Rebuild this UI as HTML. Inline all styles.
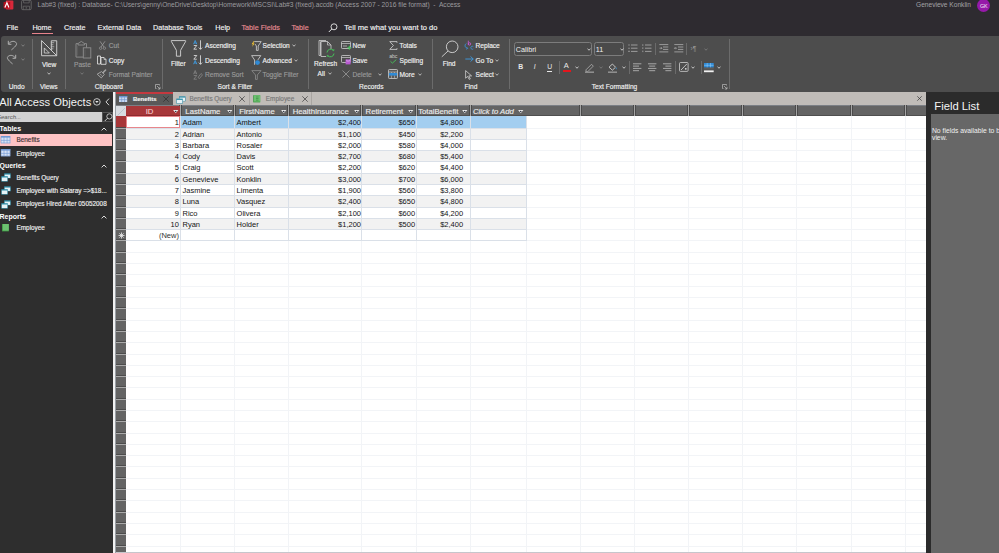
<!DOCTYPE html>
<html><head><meta charset="utf-8">
<style>
*{box-sizing:border-box}
html,body{margin:0;padding:0}
body{width:999px;height:553px;overflow:hidden;position:relative;background:#2e2b30;font-family:"Liberation Sans",sans-serif;}
.a{position:absolute;white-space:pre;line-height:1}
.rb,.gl,.tb,.nv,.gh,.tt{-webkit-text-stroke:0.15px currentColor}
.tb{font-size:7.2px;color:#f2f2f2}
.rb{font-size:6.6px;color:#f0f0f0}
.dis{color:#9a9a9a}
.gl{font-size:6.6px;color:#f0f0f0}
.sep{position:absolute;width:1px;background:#6b6b6b}
.nv{font-size:6.4px;color:#f0f0f0}
.nh{font-size:7px;color:#fff;font-weight:bold}
.gd{font-size:7.5px;color:#141414}
.gh{font-size:7.7px;color:#ececec}
.tt{font-size:6.4px}
svg{position:absolute;overflow:visible}
</style></head>
<body>
<!-- TITLE BAR -->
<svg style="left:2.5px;top:0px" width="11" height="11" viewBox="0 0 11 11"><rect x="2.8" y="0.6" width="7.6" height="8.8" rx="1" fill="#d8283a"/><rect x="0.6" y="2" width="6.6" height="6.4" rx="0.6" fill="#b5101e"/><path d="M1.9 7.4L3.9 2.7L5.9 7.4" fill="none" stroke="#fff" stroke-width="1.2"/></svg>
<svg style="left:21px;top:0px" width="11" height="11" viewBox="0 0 11 11"><rect x="0.6" y="0.3" width="9.6" height="9.4" rx="1.2" fill="none" stroke="#6e6e6e" stroke-width="0.8"/><path d="M2.6 0.4V2.9H8.2V0.4" fill="none" stroke="#6e6e6e" stroke-width="0.7"/><path d="M2.2 9.6V6.2H8.6V9.6" fill="none" stroke="#6e6e6e" stroke-width="0.7"/><rect x="4.6" y="7.2" width="1.5" height="1.4" fill="#5a5a5a"/></svg>
<div class="a" style="left:37.5px;top:2px;font-size:6.67px;color:#9c9b9f">Lab#3 (fixed) : Database- C:\Users\genny\OneDrive\Desktop\Homework\MSCSI\Lab#3 (fixed).accdb (Access 2007 - 2016 file format)  -  Access</div>
<div class="a" style="left:916px;top:2px;font-size:6.6px;color:#a4a3a7">Genevieve Konklin</div>
<div class="a" style="left:977.2px;top:-1px;width:13.2px;height:13.2px;border-radius:50%;background:#9619a9"></div>
<div class="a" style="left:977.2px;top:3.6px;width:13.2px;text-align:center;font-size:5.4px;color:#f4e8f6">GK</div>

<!-- TABS -->
<div class="a tb" style="left:6.6px;top:24.3px">File</div>
<div class="a tb" style="left:32.4px;top:24.3px">Home</div>
<div class="a" style="left:32.4px;top:33.2px;width:20.6px;height:1.3px;background:#e8838b"></div>
<div class="a tb" style="left:64px;top:24.3px">Create</div>
<div class="a tb" style="left:97.6px;top:24.3px">External Data</div>
<div class="a tb" style="left:153px;top:24.3px">Database Tools</div>
<div class="a tb" style="left:215.2px;top:24.3px">Help</div>
<div class="a tb" style="left:241.5px;top:24.3px;color:#e58b92">Table Fields</div>
<div class="a tb" style="left:291.5px;top:24.3px;color:#e58b92">Table</div>
<svg style="left:328px;top:22.5px" width="10" height="10" viewBox="0 0 10 10"><circle cx="6" cy="3.8" r="3" fill="none" stroke="#e8e8e8" stroke-width="0.9"/><path d="M3.8 6L0.8 9" stroke="#e8e8e8" stroke-width="1"/></svg>
<div class="a tb" style="left:344.3px;top:24.1px;font-size:7.55px">Tell me what you want to do</div>

<!-- RIBBON -->
<div class="a" style="left:0.6px;top:36px;width:999px;height:55.8px;background:#4d4d4d;border-radius:3px 0 0 3px"></div>
<!-- separators -->
<div class="sep" style="left:32.4px;top:38.5px;height:50.3px"></div>
<div class="sep" style="left:65.4px;top:38.5px;height:50.3px"></div>
<div class="sep" style="left:162.2px;top:38.5px;height:50.3px"></div>
<div class="sep" style="left:308px;top:38.5px;height:50.3px"></div>
<div class="sep" style="left:432.4px;top:38.5px;height:50.3px"></div>
<div class="sep" style="left:509px;top:38.5px;height:50.3px"></div>
<div class="sep" style="left:728.5px;top:38.5px;height:50.3px"></div>
<!-- group labels -->
<div class="a gl" style="left:8.8px;top:84.0px">Undo</div>
<div class="a gl" style="left:40px;top:84.0px">Views</div>
<div class="a gl" style="left:94.8px;top:84.0px">Clipboard</div>
<div class="a gl" style="left:217.5px;top:84.0px">Sort &amp; Filter</div>
<div class="a gl" style="left:359px;top:84.0px">Records</div>
<div class="a gl" style="left:464.6px;top:84.0px">Find</div>
<div class="a gl" style="left:591.8px;top:84.0px">Text Formatting</div>
<svg style="left:155px;top:84px" width="6" height="6" viewBox="0 0 6 6"><path d="M0.5 0.5h4v1M0.5 0.5v4h1" fill="none" stroke="#bdbdbd" stroke-width="0.7"/><path d="M2 2l3 3M5 2.8V5H2.8" fill="none" stroke="#bdbdbd" stroke-width="0.7"/></svg>
<svg style="left:721.5px;top:84px" width="6" height="6" viewBox="0 0 6 6"><path d="M0.5 0.5h4v1M0.5 0.5v4h1" fill="none" stroke="#bdbdbd" stroke-width="0.7"/><path d="M2 2l3 3M5 2.8V5H2.8" fill="none" stroke="#bdbdbd" stroke-width="0.7"/></svg>

<!-- UNDO -->
<svg style="left:7px;top:39.5px" width="11" height="11" viewBox="0 0 11 11"><path d="M1.3 0.8V4.3H4.4" fill="none" stroke="#b0b0b0" stroke-width="1"/><path d="M1.6 4C3 1.6 6.5 0.4 8.8 2.3C10.5 3.7 9.7 5.6 4.4 9.9" fill="none" stroke="#b0b0b0" stroke-width="0.95"/></svg>
<svg style="left:21.3px;top:43.6px" width="4" height="3" viewBox="0 0 4 3"><path d="M0.5 0.8L2 2.2L3.5 0.8" fill="none" stroke="#9a9a9a" stroke-width="0.7"/></svg>
<svg style="left:7px;top:53.8px" width="11" height="11" viewBox="0 0 11 11"><path d="M8.7 0.8V4.3H5.6" fill="none" stroke="#b0b0b0" stroke-width="1"/><path d="M8.4 4C7 1.6 3.5 0.4 1.2 2.3C-0.5 3.7 0.3 5.6 5.6 9.9" fill="none" stroke="#b0b0b0" stroke-width="0.95"/></svg>
<svg style="left:21.3px;top:58.4px" width="4" height="3" viewBox="0 0 4 3"><path d="M0.5 0.8L2 2.2L3.5 0.8" fill="none" stroke="#9a9a9a" stroke-width="0.7"/></svg>

<!-- VIEW -->
<svg style="left:40.6px;top:40.3px" width="16.5" height="16.5" viewBox="0 0 17 17"><path d="M0.6 0.6L16.2 16.2H0.6Z" fill="none" stroke="#d4d4d4" stroke-width="0.95"/><path d="M3.4 8.2L8.6 13.4H3.4Z" fill="none" stroke="#d4d4d4" stroke-width="0.85"/><path d="M10.6 10.6V0.8h5.6v15.4" fill="none" stroke="#d4d4d4" stroke-width="0.95"/><path d="M10.6 2.8h3M10.6 4.9h2.2M10.6 7h3M10.6 9.1h2.2" stroke="#d4d4d4" stroke-width="0.7"/></svg>
<div class="a rb" style="left:42px;top:61.8px">View</div>
<svg style="left:47px;top:71.5px" width="4" height="3" viewBox="0 0 4 3"><path d="M0.5 0.8L2 2.2L3.5 0.8" fill="none" stroke="#e0e0e0" stroke-width="0.8"/></svg>

<!-- CLIPBOARD -->
<svg style="left:75px;top:40.5px" width="17" height="18" viewBox="0 0 17 18"><path d="M3 2.6H1v13.5h7" fill="none" stroke="#8e8e8e" stroke-width="0.9"/><path d="M9.5 2.6h2v4" fill="none" stroke="#8e8e8e" stroke-width="0.9"/><path d="M3 2.6L6.3 0.4L9.5 2.6V4H3Z" fill="none" stroke="#8e8e8e" stroke-width="0.9"/><rect x="8.3" y="6.8" width="7.5" height="10.2" fill="none" stroke="#8e8e8e" stroke-width="0.9"/><path d="M2.6 4.5v10M10 8.5v7" stroke="#6a6a6a" stroke-width="0.5"/></svg>
<div class="a rb dis" style="left:74px;top:61.8px">Paste</div>
<svg style="left:79.5px;top:71.5px" width="4" height="3" viewBox="0 0 4 3"><path d="M0.5 0.8L2 2.2L3.5 0.8" fill="none" stroke="#8e8e8e" stroke-width="0.7"/></svg>
<svg style="left:98.5px;top:40.8px" width="7" height="9" viewBox="0 0 7 9"><path d="M1 0.3L5 6M6 0.3L2 6" fill="none" stroke="#9a9a9a" stroke-width="0.8"/><circle cx="1.6" cy="7.2" r="1.2" fill="none" stroke="#9a9a9a" stroke-width="0.7"/><circle cx="5.4" cy="7.2" r="1.2" fill="none" stroke="#9a9a9a" stroke-width="0.7"/></svg>
<div class="a rb dis" style="left:108.8px;top:43.0px">Cut</div>
<svg style="left:97px;top:54.5px" width="10" height="10" viewBox="0 0 10 10"><path d="M0.5 1h3v8h-3z" fill="none" stroke="#e8e8e8" stroke-width="0.8"/><path d="M4 2.5h3l2 2v4.8H4z" fill="none" stroke="#e8e8e8" stroke-width="0.8"/><path d="M7 2.5v2h2" fill="none" stroke="#e8e8e8" stroke-width="0.6"/></svg>
<div class="a rb" style="left:108.8px;top:57.5px">Copy</div>
<svg style="left:96px;top:68px" width="11" height="11" viewBox="0 0 11 11"><path d="M1.2 6.2L5.3 9.9L8.3 6.4L5.6 3.6Z" fill="none" stroke="#a4a4a4" stroke-width="1" stroke-linejoin="round"/><path d="M4 6.2L6 7.6" stroke="#a4a4a4" stroke-width="0.7"/><path d="M7.2 4.6L9.6 2" stroke="#a4a4a4" stroke-width="1.5" stroke-linecap="round"/></svg>
<div class="a rb dis" style="left:108.8px;top:72.2px">Format Painter</div>

<!-- SORT & FILTER -->
<svg style="left:169.5px;top:40px" width="17" height="17" viewBox="0 0 17 17"><path d="M1.3 0.6H15.2Q16.2 0.6 15.6 1.5L10.6 10.3V16.2H6.4V10.3L1.4 1.5Q0.8 0.6 1.3 0.6Z" fill="none" stroke="#d6d6d6" stroke-width="0.9"/></svg>
<div class="a rb" style="left:171px;top:61.2px">Filter</div>
<svg style="left:193.3px;top:40px" width="10" height="10" viewBox="0 0 10 10"><path d="M0.6 4.2L2.2 0.5L3.8 4.2M1.2 3h2" fill="none" stroke="#3e9be0" stroke-width="0.9"/><path d="M0.8 5.5h3L0.8 9.2h3" fill="none" stroke="#e8e8e8" stroke-width="0.8"/><path d="M7.5 0.3v9M5.8 7.6L7.5 9.3L9.2 7.6" fill="none" stroke="#e8e8e8" stroke-width="0.8"/></svg>
<div class="a rb" style="left:205px;top:43.0px">Ascending</div>
<svg style="left:193.3px;top:54.5px" width="10" height="10" viewBox="0 0 10 10"><path d="M0.6 9.2L2.2 5.5L3.8 9.2M1.2 8h2" fill="none" stroke="#3e9be0" stroke-width="0.9"/><path d="M0.8 0.5h3L0.8 4.2h3" fill="none" stroke="#e8e8e8" stroke-width="0.8"/><path d="M7.5 0.3v9M5.8 7.6L7.5 9.3L9.2 7.6" fill="none" stroke="#e8e8e8" stroke-width="0.8"/></svg>
<div class="a rb" style="left:205px;top:57.5px">Descending</div>
<svg style="left:193.3px;top:69.5px" width="10" height="10" viewBox="0 0 10 10"><path d="M0.6 4.2L2.2 0.5L3.8 4.2M1.2 3h2M0.8 5.5h3L0.8 9.2h3" fill="none" stroke="#8e8e8e" stroke-width="0.7"/><path d="M5 7.5L8 3.5L9.5 4.8L6.5 8.5Z" fill="none" stroke="#8e8e8e" stroke-width="0.7"/></svg>
<div class="a rb dis" style="left:205px;top:72.2px">Remove Sort</div>
<svg style="left:250.5px;top:40.5px" width="11" height="10" viewBox="0 0 11 10"><path d="M3.2 0.6H10.2L7.2 5V9.4H5.4V5L4 3" fill="none" stroke="#d6d6d6" stroke-width="0.8"/><path d="M2.5 0.2L0.6 3.2H2L1 6L3.6 2.6H2.3L3.3 0.2Z" fill="#f4c430"/></svg>
<div class="a rb" style="left:262.6px;top:43.0px">Selection</div>
<svg style="left:291.8px;top:44px" width="4" height="3" viewBox="0 0 4 3"><path d="M0.5 0.8L2 2.2L3.5 0.8" fill="none" stroke="#e0e0e0" stroke-width="0.8"/></svg>
<svg style="left:250.5px;top:54.5px" width="11" height="11" viewBox="0 0 11 11"><path d="M0.6 0.6H9.8L6.8 5M3.6 5L0.6 0.6M3.6 5V9.8" fill="none" stroke="#d6d6d6" stroke-width="0.8"/><circle cx="6.5" cy="7.6" r="2.4" fill="#2f8ad6"/></svg>
<div class="a rb" style="left:262.6px;top:57.5px">Advanced</div>
<svg style="left:294.3px;top:58.5px" width="4" height="3" viewBox="0 0 4 3"><path d="M0.5 0.8L2 2.2L3.5 0.8" fill="none" stroke="#e0e0e0" stroke-width="0.8"/></svg>
<svg style="left:250.5px;top:69.5px" width="11" height="10" viewBox="0 0 11 10"><path d="M0.8 0.6H10L6.3 5V9.4H4.5V5Z" fill="none" stroke="#8e8e8e" stroke-width="0.8"/></svg>
<div class="a rb dis" style="left:262.6px;top:72.2px">Toggle Filter</div>

<!-- RECORDS -->
<svg style="left:318px;top:40px" width="18" height="18" viewBox="0 0 18 18"><path d="M2.5 1.5V15.5H1V0.5h7" fill="none" stroke="#cfcfcf" stroke-width="0.8"/><path d="M3 1.5h6.5l3.5 3.5V9M3 1.5V16.5h5" fill="none" stroke="#cfcfcf" stroke-width="0.8"/><path d="M9.5 1.5v3.5h3.5" fill="none" stroke="#cfcfcf" stroke-width="0.7"/><path d="M9 12.5A3.6 3.6 0 0 1 15.4 10.5M16 13.5A3.6 3.6 0 0 1 9.6 15.5" fill="none" stroke="#46c25a" stroke-width="1"/><path d="M14.2 9.6l1.5 1.2l0.2-1.8M10.8 16.4l-1.5-1.2l-0.2 1.8" fill="none" stroke="#46c25a" stroke-width="0.8"/></svg>
<div class="a rb" style="left:314px;top:61.4px">Refresh</div>
<div class="a rb" style="left:317.6px;top:70.9px">All</div>
<svg style="left:327.5px;top:71.5px" width="4" height="3" viewBox="0 0 4 3"><path d="M0.5 0.8L2 2.2L3.5 0.8" fill="none" stroke="#e0e0e0" stroke-width="0.8"/></svg>
<svg style="left:340.5px;top:40.5px" width="11" height="9" viewBox="0 0 11 9"><rect x="0.5" y="0.5" width="9" height="7" rx="0.8" fill="none" stroke="#cfcfcf" stroke-width="0.8"/><path d="M0.5 2.5h9M2 5h4" stroke="#cfcfcf" stroke-width="0.7"/><path d="M8.3 4.8v4M6.3 6.8h4" stroke="#46c25a" stroke-width="1.1"/></svg>
<div class="a rb" style="left:352.4px;top:43.0px">New</div>
<svg style="left:340.5px;top:54.5px" width="11" height="10" viewBox="0 0 11 10"><rect x="0.5" y="0.5" width="9" height="7" rx="0.8" fill="none" stroke="#cfcfcf" stroke-width="0.8"/><path d="M0.5 2.5h9" stroke="#cfcfcf" stroke-width="0.7"/><rect x="4.6" y="4.4" width="5" height="5" fill="#b65ad0"/><path d="M5.8 4.6v1.5h2.6V4.6" stroke="#e9c8f2" stroke-width="0.5" fill="none"/></svg>
<div class="a rb" style="left:352.4px;top:57.5px">Save</div>
<svg style="left:341.8px;top:69.8px" width="8" height="8" viewBox="0 0 8 8"><path d="M0.5 0.5L7.5 7.5M7.5 0.5L0.5 7.5" stroke="#9a9a9a" stroke-width="0.8"/></svg>
<div class="a rb dis" style="left:352.6px;top:72.2px">Delete</div>
<svg style="left:377.5px;top:73px" width="4" height="3" viewBox="0 0 4 3"><path d="M0.5 0.8L2 2.2L3.5 0.8" fill="none" stroke="#d8d8d8" stroke-width="0.8"/></svg>
<svg style="left:389px;top:40.5px" width="9" height="9" viewBox="0 0 9 9"><path d="M8 1.8V0.6H0.8L4.4 4.5L0.8 8.4H8V7.2" fill="none" stroke="#d6d6d6" stroke-width="0.8"/></svg>
<div class="a rb" style="left:399.6px;top:43.0px">Totals</div>
<div class="a" style="left:389.3px;top:54.2px;font-size:5.2px;color:#c8c8c8;letter-spacing:-0.2px">abc</div>
<svg style="left:390px;top:59.2px" width="7" height="5" viewBox="0 0 7 5"><path d="M0.5 2.3L2.4 4.1L6.3 0.6" fill="none" stroke="#46b85a" stroke-width="1"/></svg>
<div class="a rb" style="left:399.6px;top:57.5px">Spelling</div>
<svg style="left:388px;top:68.9px" width="10" height="10" viewBox="0 0 10 10"><rect x="0.5" y="0.5" width="9" height="9" rx="0.8" fill="#5a5a5a" stroke="#cfcfcf" stroke-width="0.8"/><path d="M0.5 3h9" stroke="#cfcfcf" stroke-width="0.6"/><rect x="0.9" y="4" width="8.2" height="2.6" fill="#2f8ad6"/><path d="M3.5 3v1M6.5 3v1M3.5 6.6v2.6M6.5 6.6v2.6" stroke="#cfcfcf" stroke-width="0.5"/></svg>
<div class="a rb" style="left:399.6px;top:72.2px">More</div>
<svg style="left:417.5px;top:73px" width="4" height="3" viewBox="0 0 4 3"><path d="M0.5 0.8L2 2.2L3.5 0.8" fill="none" stroke="#e0e0e0" stroke-width="0.8"/></svg>

<!-- FIND -->
<svg style="left:440.5px;top:40px" width="18" height="18" viewBox="0 0 18 18"><circle cx="11.2" cy="6.8" r="5.8" fill="none" stroke="#d6d6d6" stroke-width="0.9"/><path d="M7 11L0.8 16.8" stroke="#d6d6d6" stroke-width="0.9"/></svg>
<div class="a rb" style="left:442.7px;top:60.6px">Find</div>
<svg style="left:464px;top:39.5px" width="10" height="11" viewBox="0 0 10 11"><path d="M4.3 0.7v4.4" stroke="#c95ad6" stroke-width="0.8"/><circle cx="5.5" cy="3.9" r="1.2" fill="none" stroke="#c95ad6" stroke-width="0.8"/><path d="M9.3 6.6A1.5 1.5 0 1 0 9.3 8.9" fill="none" stroke="#3a94dc" stroke-width="0.8"/><path d="M2.4 3.4C0.4 4.6 0.6 7.6 3.4 8.3" fill="none" stroke="#3a94dc" stroke-width="0.9"/><path d="M2.5 7.1L3.7 8.3L2.4 9.4" fill="none" stroke="#3a94dc" stroke-width="0.8"/></svg>
<div class="a rb" style="left:475.6px;top:43.0px">Replace</div>
<svg style="left:464.5px;top:56px" width="9" height="6" viewBox="0 0 9 6"><path d="M0.3 3h8M5.5 0.4L8.2 3L5.5 5.6" fill="none" stroke="#3e9be0" stroke-width="0.9"/></svg>
<div class="a rb" style="left:475.6px;top:57.5px">Go To</div>
<svg style="left:494.8px;top:58.5px" width="4" height="3" viewBox="0 0 4 3"><path d="M0.5 0.8L2 2.2L3.5 0.8" fill="none" stroke="#e0e0e0" stroke-width="0.8"/></svg>
<svg style="left:465.3px;top:69.8px" width="8" height="10" viewBox="0 0 8 10"><path d="M0.6 0.6V8.2L2.6 6.4L4.2 9.4L5.3 8.9L3.8 5.9H6.6Z" fill="none" stroke="#d8d8d8" stroke-width="0.75" stroke-linejoin="round"/></svg>
<div class="a rb" style="left:475.6px;top:72.2px">Select</div>
<svg style="left:495.2px;top:73px" width="4" height="3" viewBox="0 0 4 3"><path d="M0.5 0.8L2 2.2L3.5 0.8" fill="none" stroke="#e0e0e0" stroke-width="0.8"/></svg>

<!-- TEXT FORMATTING -->
<div class="a" style="left:514px;top:42px;width:77.7px;height:13.5px;border:0.8px solid #7c7c7c;border-radius:2.5px;background:#4a4a4a"></div>
<div class="a" style="left:515.8px;top:45.6px;font-size:7.2px;color:#f0f0f0">Calibri</div>
<svg style="left:586.8px;top:48px" width="4" height="3" viewBox="0 0 4 3"><path d="M0.5 0.8L2 2.2L3.5 0.8" fill="none" stroke="#e8e8e8" stroke-width="0.8"/></svg>
<div class="a" style="left:593.9px;top:42px;width:30.6px;height:13.5px;border:0.8px solid #7c7c7c;border-radius:2.5px;background:#4a4a4a"></div>
<div class="a" style="left:595.7px;top:45.6px;font-size:7.2px;color:#f0f0f0">11</div>
<svg style="left:619.6px;top:48px" width="4" height="3" viewBox="0 0 4 3"><path d="M0.5 0.8L2 2.2L3.5 0.8" fill="none" stroke="#e8e8e8" stroke-width="0.8"/></svg>
<svg style="left:627.5px;top:44.4px" width="10" height="9" viewBox="0 0 10 9"><path d="M0.5 1h1M0.5 4.2h1M0.5 7.4h1" stroke="#bdbdbd" stroke-width="1.1"/><path d="M3 1h6.5M3 4.2h6.5M3 7.4h6.5" stroke="#bdbdbd" stroke-width="0.7"/></svg>
<svg style="left:642.2px;top:44.4px" width="10" height="9" viewBox="0 0 10 9"><path d="M0.8 0.3v1.5M0.8 3.4v1.5M0.8 6.6v1.5" stroke="#bdbdbd" stroke-width="0.7"/><path d="M3 1h6.5M3 4.2h6.5M3 7.4h6.5" stroke="#bdbdbd" stroke-width="0.7"/></svg>
<div class="sep" style="left:655.4px;top:42.6px;height:12.9px"></div>
<svg style="left:659px;top:44.4px" width="10" height="9" viewBox="0 0 10 9"><path d="M0.3 0.6h9M4 3h5.3M4 5.4h5.3M0.3 7.9h9" stroke="#bdbdbd" stroke-width="0.7"/><path d="M0.5 4.2h2.5M2 3.2l1 1l-1 1" fill="none" stroke="#bdbdbd" stroke-width="0.6"/></svg>
<svg style="left:673.5px;top:44.4px" width="10" height="9" viewBox="0 0 10 9"><path d="M0.3 0.6h9M4 3h5.3M4 5.4h5.3M0.3 7.9h9" stroke="#bdbdbd" stroke-width="0.7"/><path d="M0.5 4.2h2.5M1.5 3.2l-1 1l1 1" fill="none" stroke="#bdbdbd" stroke-width="0.6"/></svg>
<div class="sep" style="left:686.4px;top:42.6px;height:12.9px"></div>
<div class="a" style="left:690.5px;top:45.6px;font-size:6.5px;color:#9a9a9a">›¶</div>
<svg style="left:703.5px;top:48px" width="4" height="3" viewBox="0 0 4 3"><path d="M0.5 0.8L2 2.2L3.5 0.8" fill="none" stroke="#8a8a8a" stroke-width="0.7"/></svg>

<div class="a" style="left:518.2px;top:64px;font-size:6.8px;font-weight:bold;color:#e8e8e8">B</div>
<div class="a" style="left:533.8px;top:64px;font-size:6.8px;font-style:italic;color:#e8e8e8">I</div>
<div class="a" style="left:547.2px;top:63.8px;font-size:6.8px;color:#e8e8e8">U</div>
<div class="a" style="left:547.2px;top:70.6px;width:5.2px;height:0.8px;background:#e8e8e8"></div>
<div class="sep" style="left:558.5px;top:60.6px;height:13.2px"></div>
<div class="a" style="left:563.8px;top:62.2px;font-size:7.5px;color:#e8e8e8">A</div>
<div class="a" style="left:562.7px;top:69.6px;width:8.1px;height:2.1px;background:#e3161d"></div>
<svg style="left:575px;top:66.2px" width="4" height="3" viewBox="0 0 4 3"><path d="M0.5 0.8L2 2.2L3.5 0.8" fill="none" stroke="#e8e8e8" stroke-width="0.8"/></svg>
<svg style="left:585px;top:62.5px" width="10" height="10" viewBox="0 0 10 10"><path d="M1 6.8L6.5 1.3L8.3 3.1L2.8 8.6H1Z" fill="none" stroke="#bdbdbd" stroke-width="0.7"/><rect x="0" y="8.4" width="9" height="1.6" fill="#8e8e8e"/></svg>
<svg style="left:598.5px;top:66.2px" width="4" height="3" viewBox="0 0 4 3"><path d="M0.5 0.8L2 2.2L3.5 0.8" fill="none" stroke="#8a8a8a" stroke-width="0.7"/></svg>
<svg style="left:608.3px;top:62.5px" width="10" height="10" viewBox="0 0 10 10"><path d="M1 4.2L4.4 1L7.5 4.2L4.4 7.2Z" fill="none" stroke="#e0e0e0" stroke-width="0.8"/><path d="M8.2 4.2q1 1.3 0 2.2q-1-0.9 0-2.2" fill="#3e9be0"/><rect x="0" y="8.4" width="9" height="1.6" fill="#8e8e8e"/></svg>
<svg style="left:621.5px;top:66.2px" width="4" height="3" viewBox="0 0 4 3"><path d="M0.5 0.8L2 2.2L3.5 0.8" fill="none" stroke="#e8e8e8" stroke-width="0.8"/></svg>
<div class="sep" style="left:629.4px;top:60.6px;height:13.2px"></div>
<svg style="left:633.2px;top:63px" width="9" height="9" viewBox="0 0 9 9"><path d="M0 0.8h8.4M0 3.1h6M0 5.4h8.4M0 7.7h6" stroke="#cfcfcf" stroke-width="0.7"/></svg>
<svg style="left:647.9px;top:63px" width="9" height="9" viewBox="0 0 9 9"><path d="M0 0.8h8.4M1.2 3.1h6M0 5.4h8.4M1.2 7.7h6" stroke="#cfcfcf" stroke-width="0.7"/></svg>
<svg style="left:662.6px;top:63px" width="9" height="9" viewBox="0 0 9 9"><path d="M0 0.8h8.4M2.4 3.1h6M0 5.4h8.4M2.4 7.7h6" stroke="#cfcfcf" stroke-width="0.7"/></svg>
<div class="sep" style="left:675.3px;top:60.6px;height:13.2px"></div>
<svg style="left:678.5px;top:62.2px" width="10" height="10" viewBox="0 0 10 10"><rect x="0.5" y="0.5" width="8.6" height="8.9" rx="1" fill="none" stroke="#cfcfcf" stroke-width="0.8"/><path d="M2 8L7.8 2" stroke="#dcdcdc" stroke-width="0.8"/><circle cx="6.8" cy="6.8" r="0.9" fill="#dcdcdc"/></svg>
<svg style="left:690.8px;top:66.2px" width="4" height="3" viewBox="0 0 4 3"><path d="M0.5 0.8L2 2.2L3.5 0.8" fill="none" stroke="#e8e8e8" stroke-width="0.8"/></svg>
<div class="sep" style="left:700.5px;top:60.6px;height:13.2px"></div>
<svg style="left:703.8px;top:62.7px" width="10" height="10" viewBox="0 0 10 10"><rect x="0" y="0" width="9.7" height="4.6" fill="#2f8ad6"/><path d="M0 2.3h9.7M3.2 0v4.6M6.5 0v4.6" stroke="#9fd0f5" stroke-width="0.5"/><rect x="0" y="4.6" width="9.7" height="2" fill="#5a5a5a"/><rect x="0" y="7.4" width="9.7" height="1.8" fill="#f0f0f0"/></svg>
<svg style="left:717.2px;top:66.2px" width="4" height="3" viewBox="0 0 4 3"><path d="M0.5 0.8L2 2.2L3.5 0.8" fill="none" stroke="#e8e8e8" stroke-width="0.8"/></svg>

<!-- NAV PANE -->
<div class="a" style="left:0;top:91.6px;width:112.8px;height:461.4px;background:#2e2e2e"></div>
<div class="a" style="left:112.8px;top:91.6px;width:2.2px;height:461.4px;background:#f2f2f2"></div>
<div class="a" style="left:115px;top:91.6px;width:1px;height:461.4px;background:#9aa0a6"></div>
<div class="a" style="left:-0.8px;top:96.5px;font-size:11.2px;color:#f2f2f2">All Access Objects</div>
<svg style="left:93.2px;top:98.2px" width="8" height="8" viewBox="0 0 8 8"><circle cx="3.9" cy="3.9" r="3.3" fill="none" stroke="#e8e8e8" stroke-width="0.8"/><path d="M2.2 3.1L3.9 4.9L5.6 3.1Z" fill="#e8e8e8"/></svg>
<svg style="left:104.8px;top:98.3px" width="5" height="8" viewBox="0 0 5 8"><path d="M4 0.6L1 3.9L4 7.2" fill="none" stroke="#e8e8e8" stroke-width="0.9"/></svg>
<div class="a" style="left:0;top:112.1px;width:101.6px;height:9.5px;background:#d2d2d2"></div>
<div class="a" style="left:-3px;top:114.3px;font-size:6px;font-style:italic;color:#555">Search...</div>
<div class="a" style="left:101.6px;top:112.1px;width:11px;height:9.5px;border:0.7px solid #555;background:#2b2b2b"></div>
<svg style="left:103.5px;top:113px" width="9" height="9" viewBox="0 0 9 9"><circle cx="5.4" cy="3.4" r="2.6" fill="none" stroke="#dcdcdc" stroke-width="0.8"/><path d="M3.6 5.2L0.8 8" stroke="#dcdcdc" stroke-width="0.9"/></svg>
<div class="a nh" style="left:-0.5px;top:125.2px">Tables</div>
<svg style="left:101px;top:126.5px" width="6" height="4" viewBox="0 0 6 4"><path d="M0.6 3.4L3 1L5.4 3.4" fill="none" stroke="#f0f0f0" stroke-width="0.9"/></svg>
<div class="a" style="left:0;top:133.8px;width:112.2px;height:12.4px;background:#fec3c4"></div>
<svg style="left:1px;top:135.5px" width="10" height="8" viewBox="0 0 10 8"><rect x="0" y="0" width="9.2" height="7.2" fill="#d6e2f4"/><rect x="0" y="0" width="9.2" height="1.6" fill="#7099d4"/><path d="M3 0v7.2M6.1 0v7.2M0 4.4h9.2M0 0.2v7M9 0.2v7M0 7h9.2" stroke="#7099d4" stroke-width="0.6"/></svg>
<div class="a nv" style="left:16.5px;top:137.0px;color:#3b2f30">Benefits</div>
<svg style="left:1px;top:149.1px" width="10" height="8" viewBox="0 0 10 8"><rect x="0" y="0" width="9.2" height="7.2" fill="#d6e2f4"/><rect x="0" y="0" width="9.2" height="1.6" fill="#7099d4"/><path d="M3 0v7.2M6.1 0v7.2M0 4.4h9.2M0 0.2v7M9 0.2v7M0 7h9.2" stroke="#7099d4" stroke-width="0.6"/></svg>
<div class="a nv" style="left:16.5px;top:150.6px">Employee</div>
<div class="a nh" style="left:-0.5px;top:162.4px">Queries</div>
<svg style="left:101px;top:163.6px" width="6" height="4" viewBox="0 0 6 4"><path d="M0.6 3.4L3 1L5.4 3.4" fill="none" stroke="#f0f0f0" stroke-width="0.9"/></svg>
<svg style="left:1px;top:172.9px" width="10" height="9" viewBox="0 0 10 9"><rect x="3.2" y="0.3" width="6.5" height="5" fill="#2f8ea8"/><rect x="3.7" y="1.6" width="5.5" height="3.3" fill="#e6f2f6"/><rect x="0.3" y="3.2" width="6.5" height="5.4" fill="#2f8ea8"/><rect x="0.8" y="4.5" width="5.5" height="3.6" fill="#e6f2f6"/></svg>
<div class="a nv" style="left:16.5px;top:174.6px">Benefits Query</div>
<svg style="left:1px;top:186.2px" width="10" height="9" viewBox="0 0 10 9"><rect x="3.2" y="0.3" width="6.5" height="5" fill="#2f8ea8"/><rect x="3.7" y="1.6" width="5.5" height="3.3" fill="#e6f2f6"/><rect x="0.3" y="3.2" width="6.5" height="5.4" fill="#2f8ea8"/><rect x="0.8" y="4.5" width="5.5" height="3.6" fill="#e6f2f6"/></svg>
<div class="a nv" style="left:16.5px;top:187.8px">Employee with Salaray =&gt;$18...</div>
<svg style="left:1px;top:199.8px" width="10" height="9" viewBox="0 0 10 9"><rect x="3.2" y="0.3" width="6.5" height="5" fill="#2f8ea8"/><rect x="3.7" y="1.6" width="5.5" height="3.3" fill="#e6f2f6"/><rect x="0.3" y="3.2" width="6.5" height="5.4" fill="#2f8ea8"/><rect x="0.8" y="4.5" width="5.5" height="3.6" fill="#e6f2f6"/></svg>
<div class="a nv" style="left:16.5px;top:201.4px">Employes Hired After 05052008</div>
<div class="a nh" style="left:-0.5px;top:212.9px">Reports</div>
<svg style="left:101px;top:214.7px" width="6" height="4" viewBox="0 0 6 4"><path d="M0.6 3.4L3 1L5.4 3.4" fill="none" stroke="#f0f0f0" stroke-width="0.9"/></svg>
<svg style="left:1.6px;top:223.8px" width="8" height="8" viewBox="0 0 8 8"><rect x="0" y="0" width="6.8" height="7.4" fill="#3e9a44"/><rect x="0.8" y="0" width="6" height="6.6" fill="#6cc070"/></svg>
<div class="a nv" style="left:16.5px;top:225.2px">Employee</div>

<!-- DOC AREA -->
<div class="a" style="left:116.2px;top:92px;width:809.8px;height:461px;background:#ffffff"></div>
<div class="a" style="left:116.2px;top:92px;width:809.8px;height:13px;background:#c0bcb8"></div>
<div class="a" style="left:116.2px;top:92px;width:56.8px;height:1.7px;background:#c4393f"></div>
<div class="a" style="left:116.2px;top:93.7px;width:56.8px;height:11.2px;background:#595959"></div>
<svg style="left:119.4px;top:95.9px" width="9" height="7" viewBox="0 0 9 7"><rect x="0" y="0" width="8.2" height="6" fill="#c8d8f0"/><rect x="0" y="0" width="8.2" height="1.4" fill="#6d95cf"/><path d="M2.7 0v6M5.5 0v6M0 3.6h8.2" stroke="#6d95cf" stroke-width="0.6"/></svg>
<div class="a tt" style="left:132.9px;top:96.4px;color:#f4f4f4;font-weight:bold;font-size:6.0px">Benefits</div>
<svg style="left:163px;top:95.5px" width="6" height="6" viewBox="0 0 6 6"><path d="M0.3 0.3L5.7 5.7M5.7 0.3L0.3 5.7" stroke="#2e2e2e" stroke-width="0.7"/></svg>
<svg style="left:176px;top:95.5px" width="10" height="8" viewBox="0 0 10 8"><rect x="3" y="0.3" width="6.5" height="5" fill="#2f8ea8"/><rect x="3.5" y="1.6" width="5.5" height="3.3" fill="#e6f2f6"/><rect x="0.3" y="2.6" width="6.5" height="5" fill="#2f8ea8"/><rect x="0.8" y="3.9" width="5.5" height="3.3" fill="#e6f2f6"/></svg>
<div class="a tt" style="left:189.5px;top:96.2px;color:#777">Benefits Query</div>
<svg style="left:239.4px;top:95.5px" width="6" height="6" viewBox="0 0 6 6"><path d="M0.3 0.3L5.7 5.7M5.7 0.3L0.3 5.7" stroke="#3a3a3a" stroke-width="0.7"/></svg>
<div class="a" style="left:249px;top:92px;width:0.8px;height:12.9px;background:#a9a5a1"></div>
<svg style="left:253px;top:95.3px" width="8" height="8" viewBox="0 0 8 8"><rect x="0.2" y="0.2" width="7" height="7.2" fill="#3e9a44"/><rect x="1" y="0.2" width="6.2" height="6.4" fill="#6cc070"/><path d="M3 2h2.5M3 3.6h2.5M3 5.2h2.5" stroke="#2c7a30" stroke-width="0.5"/></svg>
<div class="a tt" style="left:265.8px;top:96.2px;color:#777">Employee</div>
<svg style="left:302px;top:95.5px" width="6" height="6" viewBox="0 0 6 6"><path d="M0.3 0.3L5.7 5.7M5.7 0.3L0.3 5.7" stroke="#3a3a3a" stroke-width="0.7"/></svg>
<div class="a" style="left:311px;top:92px;width:0.8px;height:12.9px;background:#a9a5a1"></div>
<svg style="left:916.8px;top:96.3px" width="5" height="5" viewBox="0 0 5 5"><path d="M0.3 0.3L4.7 4.7M4.7 0.3L0.3 4.7" stroke="#333" stroke-width="0.7"/></svg>
<div class="a" style="left:116px;top:105px;width:810px;height:11px;background:#646464"></div>
<div class="a" style="left:116px;top:105px;width:810px;height:1px;background:#7b7f85"></div>
<div class="a" style="left:116px;top:115px;width:810px;height:1px;background:#4f4f4f"></div>
<div class="a" style="left:116.2px;top:105.6px;width:9.9px;height:10.6px;background:#d8dce1"></div>
<svg style="left:116.2px;top:105.6px" width="10" height="11" viewBox="0 0 10 11"><path d="M1.5 9.5L9 2" stroke="#aab4c0" stroke-width="0.6"/></svg>
<div class="a" style="left:179px;top:105px;width:3px;height:11px;background:#4a4a4a"></div>
<div class="a" style="left:180px;top:105px;width:1px;height:11px;background:#a4a4a4"></div>
<div class="a gh" style="left:152.9px;top:107.6px;width:100px;text-align:center;color:#ececec">LastName</div>
<svg style="left:226.7px;top:109.8px" width="6" height="4" viewBox="0 0 6 4"><path d="M0.1 0.1H5.4L2.75 3.3Z" fill="#ececec"/><circle cx="2.75" cy="1.4" r="0.75" fill="#202838"/></svg>
<div class="a" style="left:233px;top:105px;width:3px;height:11px;background:#4a4a4a"></div>
<div class="a" style="left:234px;top:105px;width:1px;height:11px;background:#a4a4a4"></div>
<div class="a gh" style="left:207.0px;top:107.6px;width:100px;text-align:center;color:#ececec">FirstName</div>
<svg style="left:280.9px;top:109.8px" width="6" height="4" viewBox="0 0 6 4"><path d="M0.1 0.1H5.4L2.75 3.3Z" fill="#ececec"/><circle cx="2.75" cy="1.4" r="0.75" fill="#202838"/></svg>
<div class="a" style="left:287px;top:105px;width:3px;height:11px;background:#4a4a4a"></div>
<div class="a" style="left:288px;top:105px;width:1px;height:11px;background:#a4a4a4"></div>
<div class="a gh" style="left:270.7px;top:107.6px;width:100px;text-align:center;color:#ececec">HealthInsurance</div>
<svg style="left:354.1px;top:109.8px" width="6" height="4" viewBox="0 0 6 4"><path d="M0.1 0.1H5.4L2.75 3.3Z" fill="#ececec"/><circle cx="2.75" cy="1.4" r="0.75" fill="#202838"/></svg>
<div class="a" style="left:360px;top:105px;width:3px;height:11px;background:#4a4a4a"></div>
<div class="a" style="left:361px;top:105px;width:1px;height:11px;background:#a4a4a4"></div>
<div class="a gh" style="left:334.4px;top:107.6px;width:100px;text-align:center;color:#ececec">Retirement</div>
<svg style="left:408.2px;top:109.8px" width="6" height="4" viewBox="0 0 6 4"><path d="M0.1 0.1H5.4L2.75 3.3Z" fill="#ececec"/><circle cx="2.75" cy="1.4" r="0.75" fill="#202838"/></svg>
<div class="a" style="left:415px;top:105px;width:3px;height:11px;background:#4a4a4a"></div>
<div class="a" style="left:416px;top:105px;width:1px;height:11px;background:#a4a4a4"></div>
<div class="a gh" style="left:418.2px;top:107.6px;width:45.1px;overflow:hidden;color:#ececec">TotalBenefit</div>
<svg style="left:462.3px;top:109.8px" width="6" height="4" viewBox="0 0 6 4"><path d="M0.1 0.1H5.4L2.75 3.3Z" fill="#ececec"/><circle cx="2.75" cy="1.4" r="0.75" fill="#202838"/></svg>
<div class="a" style="left:469px;top:105px;width:3px;height:11px;background:#4a4a4a"></div>
<div class="a" style="left:470px;top:105px;width:1px;height:11px;background:#a4a4a4"></div>
<div class="a gh" style="left:443.4px;top:107.6px;width:100px;text-align:center;font-style:italic;color:#ececec">Click to Add</div>
<svg style="left:518.2px;top:109.8px" width="6" height="4" viewBox="0 0 6 4"><path d="M0.1 0.1H5.4L2.75 3.3Z" fill="#ececec"/><circle cx="2.75" cy="1.4" r="0.75" fill="#202838"/></svg>
<div class="a" style="left:126px;top:106px;width:54px;height:9px;background:#a73739"></div>
<div class="a" style="left:126px;top:115px;width:54px;height:1px;background:#8e2a2e"></div>
<div class="a gh" style="left:99.5px;top:107.6px;width:100px;text-align:center;color:#f3c9cb">ID</div>
<svg style="left:172.8px;top:109.8px" width="6" height="4" viewBox="0 0 6 4"><path d="M0.1 0.1H5.4L2.75 3.3Z" fill="#ececec"/><circle cx="2.75" cy="1.4" r="0.75" fill="#202838"/></svg>
<div class="a" style="left:579px;top:105px;width:3px;height:11px;background:#4a4a4a"></div>
<div class="a" style="left:580px;top:105px;width:1px;height:11px;background:#a4a4a4"></div>
<div class="a" style="left:633px;top:105px;width:3px;height:11px;background:#4a4a4a"></div>
<div class="a" style="left:634px;top:105px;width:1px;height:11px;background:#a4a4a4"></div>
<div class="a" style="left:687px;top:105px;width:3px;height:11px;background:#4a4a4a"></div>
<div class="a" style="left:688px;top:105px;width:1px;height:11px;background:#a4a4a4"></div>
<div class="a" style="left:741px;top:105px;width:3px;height:11px;background:#4a4a4a"></div>
<div class="a" style="left:742px;top:105px;width:1px;height:11px;background:#a4a4a4"></div>
<div class="a" style="left:795px;top:105px;width:3px;height:11px;background:#4a4a4a"></div>
<div class="a" style="left:796px;top:105px;width:1px;height:11px;background:#a4a4a4"></div>
<div class="a" style="left:850px;top:105px;width:3px;height:11px;background:#4a4a4a"></div>
<div class="a" style="left:851px;top:105px;width:1px;height:11px;background:#a4a4a4"></div>
<div class="a" style="left:904px;top:105px;width:3px;height:11px;background:#4a4a4a"></div>
<div class="a" style="left:905px;top:105px;width:1px;height:11px;background:#a4a4a4"></div>
<div class="a" style="left:116px;top:116px;width:10px;height:12px;background:#a73739"></div>
<div class="a" style="left:126.1px;top:116.20px;width:399.8px;height:11.30px;background:#ffffff"></div>
<div class="a" style="left:116px;top:128px;width:10px;height:11px;background:#646464"></div>
<div class="a" style="left:116px;top:128px;width:10px;height:1px;background:#a9a9a9"></div>
<div class="a" style="left:116px;top:127px;width:10px;height:1px;background:#4c4c4c"></div>
<div class="a" style="left:126.1px;top:127.50px;width:399.8px;height:11.30px;background:#f2f2f2"></div>
<div class="a" style="left:116px;top:139px;width:10px;height:11px;background:#646464"></div>
<div class="a" style="left:116px;top:139px;width:10px;height:1px;background:#a9a9a9"></div>
<div class="a" style="left:116px;top:138px;width:10px;height:1px;background:#4c4c4c"></div>
<div class="a" style="left:126.1px;top:138.80px;width:399.8px;height:11.30px;background:#ffffff"></div>
<div class="a" style="left:116px;top:150px;width:10px;height:11px;background:#646464"></div>
<div class="a" style="left:116px;top:150px;width:10px;height:1px;background:#a9a9a9"></div>
<div class="a" style="left:116px;top:149px;width:10px;height:1px;background:#4c4c4c"></div>
<div class="a" style="left:126.1px;top:150.10px;width:399.8px;height:11.30px;background:#f2f2f2"></div>
<div class="a" style="left:116px;top:161px;width:10px;height:12px;background:#646464"></div>
<div class="a" style="left:116px;top:161px;width:10px;height:1px;background:#a9a9a9"></div>
<div class="a" style="left:116px;top:160px;width:10px;height:1px;background:#4c4c4c"></div>
<div class="a" style="left:126.1px;top:161.40px;width:399.8px;height:11.30px;background:#ffffff"></div>
<div class="a" style="left:116px;top:173px;width:10px;height:11px;background:#646464"></div>
<div class="a" style="left:116px;top:173px;width:10px;height:1px;background:#a9a9a9"></div>
<div class="a" style="left:116px;top:172px;width:10px;height:1px;background:#4c4c4c"></div>
<div class="a" style="left:126.1px;top:172.70px;width:399.8px;height:11.30px;background:#f2f2f2"></div>
<div class="a" style="left:116px;top:184px;width:10px;height:11px;background:#646464"></div>
<div class="a" style="left:116px;top:184px;width:10px;height:1px;background:#a9a9a9"></div>
<div class="a" style="left:116px;top:183px;width:10px;height:1px;background:#4c4c4c"></div>
<div class="a" style="left:126.1px;top:184.00px;width:399.8px;height:11.30px;background:#ffffff"></div>
<div class="a" style="left:116px;top:195px;width:10px;height:12px;background:#646464"></div>
<div class="a" style="left:116px;top:195px;width:10px;height:1px;background:#a9a9a9"></div>
<div class="a" style="left:116px;top:194px;width:10px;height:1px;background:#4c4c4c"></div>
<div class="a" style="left:126.1px;top:195.30px;width:399.8px;height:11.30px;background:#f2f2f2"></div>
<div class="a" style="left:116px;top:207px;width:10px;height:11px;background:#646464"></div>
<div class="a" style="left:116px;top:207px;width:10px;height:1px;background:#a9a9a9"></div>
<div class="a" style="left:116px;top:206px;width:10px;height:1px;background:#4c4c4c"></div>
<div class="a" style="left:126.1px;top:206.60px;width:399.8px;height:11.30px;background:#ffffff"></div>
<div class="a" style="left:116px;top:218px;width:10px;height:11px;background:#646464"></div>
<div class="a" style="left:116px;top:218px;width:10px;height:1px;background:#a9a9a9"></div>
<div class="a" style="left:116px;top:217px;width:10px;height:1px;background:#4c4c4c"></div>
<div class="a" style="left:126.1px;top:217.90px;width:399.8px;height:11.30px;background:#f2f2f2"></div>
<div class="a" style="left:116px;top:229px;width:10px;height:11px;background:#646464"></div>
<div class="a" style="left:116px;top:229px;width:10px;height:1px;background:#a9a9a9"></div>
<div class="a" style="left:116px;top:228px;width:10px;height:1px;background:#4c4c4c"></div>
<div class="a" style="left:126.1px;top:229.20px;width:399.8px;height:11.30px;background:#ffffff"></div>
<div class="a" style="left:116px;top:240px;width:10px;height:12px;background:#646464"></div>
<div class="a" style="left:116px;top:240px;width:10px;height:1px;background:#a9a9a9"></div>
<div class="a" style="left:116px;top:239px;width:10px;height:1px;background:#4c4c4c"></div>
<div class="a" style="left:126px;top:252px;width:800px;height:1px;background:#f2f4f7"></div>
<div class="a" style="left:116px;top:252px;width:10px;height:11px;background:#646464"></div>
<div class="a" style="left:116px;top:252px;width:10px;height:1px;background:#a9a9a9"></div>
<div class="a" style="left:116px;top:251px;width:10px;height:1px;background:#4c4c4c"></div>
<div class="a" style="left:126px;top:263px;width:800px;height:1px;background:#f2f4f7"></div>
<div class="a" style="left:116px;top:263px;width:10px;height:11px;background:#646464"></div>
<div class="a" style="left:116px;top:263px;width:10px;height:1px;background:#a9a9a9"></div>
<div class="a" style="left:116px;top:262px;width:10px;height:1px;background:#4c4c4c"></div>
<div class="a" style="left:126px;top:274px;width:800px;height:1px;background:#f2f4f7"></div>
<div class="a" style="left:116px;top:274px;width:10px;height:12px;background:#646464"></div>
<div class="a" style="left:116px;top:274px;width:10px;height:1px;background:#a9a9a9"></div>
<div class="a" style="left:116px;top:273px;width:10px;height:1px;background:#4c4c4c"></div>
<div class="a" style="left:126px;top:286px;width:800px;height:1px;background:#f2f4f7"></div>
<div class="a" style="left:116px;top:286px;width:10px;height:11px;background:#646464"></div>
<div class="a" style="left:116px;top:286px;width:10px;height:1px;background:#a9a9a9"></div>
<div class="a" style="left:116px;top:285px;width:10px;height:1px;background:#4c4c4c"></div>
<div class="a" style="left:126px;top:297px;width:800px;height:1px;background:#f2f4f7"></div>
<div class="a" style="left:116px;top:297px;width:10px;height:11px;background:#646464"></div>
<div class="a" style="left:116px;top:297px;width:10px;height:1px;background:#a9a9a9"></div>
<div class="a" style="left:116px;top:296px;width:10px;height:1px;background:#4c4c4c"></div>
<div class="a" style="left:126px;top:308px;width:800px;height:1px;background:#f2f4f7"></div>
<div class="a" style="left:116px;top:308px;width:10px;height:12px;background:#646464"></div>
<div class="a" style="left:116px;top:308px;width:10px;height:1px;background:#a9a9a9"></div>
<div class="a" style="left:116px;top:307px;width:10px;height:1px;background:#4c4c4c"></div>
<div class="a" style="left:126px;top:320px;width:800px;height:1px;background:#f2f4f7"></div>
<div class="a" style="left:116px;top:320px;width:10px;height:11px;background:#646464"></div>
<div class="a" style="left:116px;top:320px;width:10px;height:1px;background:#a9a9a9"></div>
<div class="a" style="left:116px;top:319px;width:10px;height:1px;background:#4c4c4c"></div>
<div class="a" style="left:126px;top:331px;width:800px;height:1px;background:#f2f4f7"></div>
<div class="a" style="left:116px;top:331px;width:10px;height:11px;background:#646464"></div>
<div class="a" style="left:116px;top:331px;width:10px;height:1px;background:#a9a9a9"></div>
<div class="a" style="left:116px;top:330px;width:10px;height:1px;background:#4c4c4c"></div>
<div class="a" style="left:126px;top:342px;width:800px;height:1px;background:#f2f4f7"></div>
<div class="a" style="left:116px;top:342px;width:10px;height:12px;background:#646464"></div>
<div class="a" style="left:116px;top:342px;width:10px;height:1px;background:#a9a9a9"></div>
<div class="a" style="left:116px;top:341px;width:10px;height:1px;background:#4c4c4c"></div>
<div class="a" style="left:126px;top:354px;width:800px;height:1px;background:#f2f4f7"></div>
<div class="a" style="left:116px;top:354px;width:10px;height:11px;background:#646464"></div>
<div class="a" style="left:116px;top:354px;width:10px;height:1px;background:#a9a9a9"></div>
<div class="a" style="left:116px;top:353px;width:10px;height:1px;background:#4c4c4c"></div>
<div class="a" style="left:126px;top:365px;width:800px;height:1px;background:#f2f4f7"></div>
<div class="a" style="left:116px;top:365px;width:10px;height:11px;background:#646464"></div>
<div class="a" style="left:116px;top:365px;width:10px;height:1px;background:#a9a9a9"></div>
<div class="a" style="left:116px;top:364px;width:10px;height:1px;background:#4c4c4c"></div>
<div class="a" style="left:126px;top:376px;width:800px;height:1px;background:#f2f4f7"></div>
<div class="a" style="left:116px;top:376px;width:10px;height:11px;background:#646464"></div>
<div class="a" style="left:116px;top:376px;width:10px;height:1px;background:#a9a9a9"></div>
<div class="a" style="left:116px;top:375px;width:10px;height:1px;background:#4c4c4c"></div>
<div class="a" style="left:126px;top:387px;width:800px;height:1px;background:#f2f4f7"></div>
<div class="a" style="left:116px;top:387px;width:10px;height:12px;background:#646464"></div>
<div class="a" style="left:116px;top:387px;width:10px;height:1px;background:#a9a9a9"></div>
<div class="a" style="left:116px;top:386px;width:10px;height:1px;background:#4c4c4c"></div>
<div class="a" style="left:126px;top:399px;width:800px;height:1px;background:#f2f4f7"></div>
<div class="a" style="left:116px;top:399px;width:10px;height:11px;background:#646464"></div>
<div class="a" style="left:116px;top:399px;width:10px;height:1px;background:#a9a9a9"></div>
<div class="a" style="left:116px;top:398px;width:10px;height:1px;background:#4c4c4c"></div>
<div class="a" style="left:126px;top:410px;width:800px;height:1px;background:#f2f4f7"></div>
<div class="a" style="left:116px;top:410px;width:10px;height:11px;background:#646464"></div>
<div class="a" style="left:116px;top:410px;width:10px;height:1px;background:#a9a9a9"></div>
<div class="a" style="left:116px;top:409px;width:10px;height:1px;background:#4c4c4c"></div>
<div class="a" style="left:126px;top:421px;width:800px;height:1px;background:#f2f4f7"></div>
<div class="a" style="left:116px;top:421px;width:10px;height:12px;background:#646464"></div>
<div class="a" style="left:116px;top:421px;width:10px;height:1px;background:#a9a9a9"></div>
<div class="a" style="left:116px;top:420px;width:10px;height:1px;background:#4c4c4c"></div>
<div class="a" style="left:126px;top:433px;width:800px;height:1px;background:#f2f4f7"></div>
<div class="a" style="left:116px;top:433px;width:10px;height:11px;background:#646464"></div>
<div class="a" style="left:116px;top:433px;width:10px;height:1px;background:#a9a9a9"></div>
<div class="a" style="left:116px;top:432px;width:10px;height:1px;background:#4c4c4c"></div>
<div class="a" style="left:126px;top:444px;width:800px;height:1px;background:#f2f4f7"></div>
<div class="a" style="left:116px;top:444px;width:10px;height:11px;background:#646464"></div>
<div class="a" style="left:116px;top:444px;width:10px;height:1px;background:#a9a9a9"></div>
<div class="a" style="left:116px;top:443px;width:10px;height:1px;background:#4c4c4c"></div>
<div class="a" style="left:126px;top:455px;width:800px;height:1px;background:#f2f4f7"></div>
<div class="a" style="left:116px;top:455px;width:10px;height:11px;background:#646464"></div>
<div class="a" style="left:116px;top:455px;width:10px;height:1px;background:#a9a9a9"></div>
<div class="a" style="left:116px;top:454px;width:10px;height:1px;background:#4c4c4c"></div>
<div class="a" style="left:126px;top:466px;width:800px;height:1px;background:#f2f4f7"></div>
<div class="a" style="left:116px;top:466px;width:10px;height:12px;background:#646464"></div>
<div class="a" style="left:116px;top:466px;width:10px;height:1px;background:#a9a9a9"></div>
<div class="a" style="left:116px;top:465px;width:10px;height:1px;background:#4c4c4c"></div>
<div class="a" style="left:126px;top:478px;width:800px;height:1px;background:#f2f4f7"></div>
<div class="a" style="left:116px;top:478px;width:10px;height:11px;background:#646464"></div>
<div class="a" style="left:116px;top:478px;width:10px;height:1px;background:#a9a9a9"></div>
<div class="a" style="left:116px;top:477px;width:10px;height:1px;background:#4c4c4c"></div>
<div class="a" style="left:126px;top:489px;width:800px;height:1px;background:#f2f4f7"></div>
<div class="a" style="left:116px;top:489px;width:10px;height:11px;background:#646464"></div>
<div class="a" style="left:116px;top:489px;width:10px;height:1px;background:#a9a9a9"></div>
<div class="a" style="left:116px;top:488px;width:10px;height:1px;background:#4c4c4c"></div>
<div class="a" style="left:126px;top:500px;width:800px;height:1px;background:#f2f4f7"></div>
<div class="a" style="left:116px;top:500px;width:10px;height:12px;background:#646464"></div>
<div class="a" style="left:116px;top:500px;width:10px;height:1px;background:#a9a9a9"></div>
<div class="a" style="left:116px;top:499px;width:10px;height:1px;background:#4c4c4c"></div>
<div class="a" style="left:126px;top:512px;width:800px;height:1px;background:#f2f4f7"></div>
<div class="a" style="left:116px;top:512px;width:10px;height:11px;background:#646464"></div>
<div class="a" style="left:116px;top:512px;width:10px;height:1px;background:#a9a9a9"></div>
<div class="a" style="left:116px;top:511px;width:10px;height:1px;background:#4c4c4c"></div>
<div class="a" style="left:126px;top:523px;width:800px;height:1px;background:#f2f4f7"></div>
<div class="a" style="left:116px;top:523px;width:10px;height:11px;background:#646464"></div>
<div class="a" style="left:116px;top:523px;width:10px;height:1px;background:#a9a9a9"></div>
<div class="a" style="left:116px;top:522px;width:10px;height:1px;background:#4c4c4c"></div>
<div class="a" style="left:126px;top:534px;width:800px;height:1px;background:#f2f4f7"></div>
<div class="a" style="left:116px;top:534px;width:10px;height:12px;background:#646464"></div>
<div class="a" style="left:116px;top:534px;width:10px;height:1px;background:#a9a9a9"></div>
<div class="a" style="left:116px;top:533px;width:10px;height:1px;background:#4c4c4c"></div>
<div class="a" style="left:126px;top:546px;width:800px;height:1px;background:#f2f4f7"></div>
<div class="a" style="left:116px;top:546px;width:10px;height:6px;background:#646464"></div>
<div class="a" style="left:116px;top:546px;width:10px;height:1px;background:#a9a9a9"></div>
<div class="a" style="left:116px;top:545px;width:10px;height:1px;background:#4c4c4c"></div>
<div class="a" style="left:126px;top:557px;width:800px;height:1px;background:#f2f4f7"></div>
<div class="a" style="left:526px;top:128px;width:400px;height:1px;background:#f2f4f7"></div>
<div class="a" style="left:526px;top:139px;width:400px;height:1px;background:#f2f4f7"></div>
<div class="a" style="left:526px;top:150px;width:400px;height:1px;background:#f2f4f7"></div>
<div class="a" style="left:526px;top:161px;width:400px;height:1px;background:#f2f4f7"></div>
<div class="a" style="left:526px;top:173px;width:400px;height:1px;background:#f2f4f7"></div>
<div class="a" style="left:526px;top:184px;width:400px;height:1px;background:#f2f4f7"></div>
<div class="a" style="left:526px;top:195px;width:400px;height:1px;background:#f2f4f7"></div>
<div class="a" style="left:526px;top:207px;width:400px;height:1px;background:#f2f4f7"></div>
<div class="a" style="left:526px;top:218px;width:400px;height:1px;background:#f2f4f7"></div>
<div class="a" style="left:526px;top:229px;width:400px;height:1px;background:#f2f4f7"></div>
<div class="a" style="left:526px;top:240px;width:400px;height:1px;background:#f2f4f7"></div>
<div class="a" style="left:126px;top:128px;width:400px;height:1px;background:#dae0e8"></div>
<div class="a" style="left:126px;top:139px;width:400px;height:1px;background:#dae0e8"></div>
<div class="a" style="left:126px;top:150px;width:400px;height:1px;background:#dae0e8"></div>
<div class="a" style="left:126px;top:161px;width:400px;height:1px;background:#dae0e8"></div>
<div class="a" style="left:126px;top:173px;width:400px;height:1px;background:#dae0e8"></div>
<div class="a" style="left:126px;top:184px;width:400px;height:1px;background:#dae0e8"></div>
<div class="a" style="left:126px;top:195px;width:400px;height:1px;background:#dae0e8"></div>
<div class="a" style="left:126px;top:207px;width:400px;height:1px;background:#dae0e8"></div>
<div class="a" style="left:126px;top:218px;width:400px;height:1px;background:#dae0e8"></div>
<div class="a" style="left:126px;top:229px;width:400px;height:1px;background:#dae0e8"></div>
<div class="a" style="left:126px;top:240px;width:400px;height:1px;background:#dae0e8"></div>
<div class="a" style="left:180.3px;top:116.20px;width:345.6px;height:11.60px;background:#a3cef0"></div>
<div class="a" style="left:180px;top:116.2px;width:1px;height:125.3px;background:#dae0e8"></div>
<div class="a" style="left:234px;top:116.2px;width:1px;height:125.3px;background:#dae0e8"></div>
<div class="a" style="left:288px;top:116.2px;width:1px;height:125.3px;background:#dae0e8"></div>
<div class="a" style="left:361px;top:116.2px;width:1px;height:125.3px;background:#dae0e8"></div>
<div class="a" style="left:416px;top:116.2px;width:1px;height:125.3px;background:#dae0e8"></div>
<div class="a" style="left:470px;top:116.2px;width:1px;height:125.3px;background:#dae0e8"></div>
<div class="a" style="left:526px;top:116.2px;width:1px;height:125.3px;background:#dae0e8"></div>
<div class="a" style="left:180px;top:240.5px;width:1px;height:312.5px;background:#f2f4f7"></div>
<div class="a" style="left:234px;top:240.5px;width:1px;height:312.5px;background:#f2f4f7"></div>
<div class="a" style="left:288px;top:240.5px;width:1px;height:312.5px;background:#f2f4f7"></div>
<div class="a" style="left:361px;top:240.5px;width:1px;height:312.5px;background:#f2f4f7"></div>
<div class="a" style="left:416px;top:240.5px;width:1px;height:312.5px;background:#f2f4f7"></div>
<div class="a" style="left:470px;top:240.5px;width:1px;height:312.5px;background:#f2f4f7"></div>
<div class="a" style="left:526px;top:240.5px;width:1px;height:312.5px;background:#f2f4f7"></div>
<div class="a" style="left:580px;top:116.2px;width:1px;height:436.8px;background:#f2f4f7"></div>
<div class="a" style="left:634px;top:116.2px;width:1px;height:436.8px;background:#f2f4f7"></div>
<div class="a" style="left:688px;top:116.2px;width:1px;height:436.8px;background:#f2f4f7"></div>
<div class="a" style="left:742px;top:116.2px;width:1px;height:436.8px;background:#f2f4f7"></div>
<div class="a" style="left:796px;top:116.2px;width:1px;height:436.8px;background:#f2f4f7"></div>
<div class="a" style="left:851px;top:116.2px;width:1px;height:436.8px;background:#f2f4f7"></div>
<div class="a" style="left:905px;top:116.2px;width:1px;height:436.8px;background:#f2f4f7"></div>
<div class="a" style="left:126.1px;top:116.20px;width:54.2px;height:11.60px;border:0.9px solid #e8868b;background:#fff"></div>
<div class="a gd" style="left:118.9px;top:119.20px;width:60px;text-align:right">1</div>
<div class="a gd" style="left:182.5px;top:119.20px">Adam</div>
<div class="a gd" style="left:236.6px;top:119.20px">Ambert</div>
<div class="a gd" style="left:301.0px;top:119.20px;width:60px;text-align:right">$2,400</div>
<div class="a gd" style="left:355.1px;top:119.20px;width:60px;text-align:right">$650</div>
<div class="a gd" style="left:403.1px;top:119.20px;width:60px;text-align:right">$4,800</div>
<div class="a gd" style="left:118.9px;top:130.50px;width:60px;text-align:right">2</div>
<div class="a gd" style="left:182.5px;top:130.50px">Adrian</div>
<div class="a gd" style="left:236.6px;top:130.50px">Antonio</div>
<div class="a gd" style="left:301.0px;top:130.50px;width:60px;text-align:right">$1,100</div>
<div class="a gd" style="left:355.1px;top:130.50px;width:60px;text-align:right">$450</div>
<div class="a gd" style="left:403.1px;top:130.50px;width:60px;text-align:right">$2,200</div>
<div class="a gd" style="left:118.9px;top:141.80px;width:60px;text-align:right">3</div>
<div class="a gd" style="left:182.5px;top:141.80px">Barbara</div>
<div class="a gd" style="left:236.6px;top:141.80px">Rosaler</div>
<div class="a gd" style="left:301.0px;top:141.80px;width:60px;text-align:right">$2,000</div>
<div class="a gd" style="left:355.1px;top:141.80px;width:60px;text-align:right">$580</div>
<div class="a gd" style="left:403.1px;top:141.80px;width:60px;text-align:right">$4,000</div>
<div class="a gd" style="left:118.9px;top:153.10px;width:60px;text-align:right">4</div>
<div class="a gd" style="left:182.5px;top:153.10px">Cody</div>
<div class="a gd" style="left:236.6px;top:153.10px">Davis</div>
<div class="a gd" style="left:301.0px;top:153.10px;width:60px;text-align:right">$2,700</div>
<div class="a gd" style="left:355.1px;top:153.10px;width:60px;text-align:right">$680</div>
<div class="a gd" style="left:403.1px;top:153.10px;width:60px;text-align:right">$5,400</div>
<div class="a gd" style="left:118.9px;top:164.40px;width:60px;text-align:right">5</div>
<div class="a gd" style="left:182.5px;top:164.40px">Craig</div>
<div class="a gd" style="left:236.6px;top:164.40px">Scott</div>
<div class="a gd" style="left:301.0px;top:164.40px;width:60px;text-align:right">$2,200</div>
<div class="a gd" style="left:355.1px;top:164.40px;width:60px;text-align:right">$620</div>
<div class="a gd" style="left:403.1px;top:164.40px;width:60px;text-align:right">$4,400</div>
<div class="a gd" style="left:118.9px;top:175.70px;width:60px;text-align:right">6</div>
<div class="a gd" style="left:182.5px;top:175.70px">Genevieve</div>
<div class="a gd" style="left:236.6px;top:175.70px">Konklin</div>
<div class="a gd" style="left:301.0px;top:175.70px;width:60px;text-align:right">$3,000</div>
<div class="a gd" style="left:355.1px;top:175.70px;width:60px;text-align:right">$700</div>
<div class="a gd" style="left:403.1px;top:175.70px;width:60px;text-align:right">$6,000</div>
<div class="a gd" style="left:118.9px;top:187.00px;width:60px;text-align:right">7</div>
<div class="a gd" style="left:182.5px;top:187.00px">Jasmine</div>
<div class="a gd" style="left:236.6px;top:187.00px">Limenta</div>
<div class="a gd" style="left:301.0px;top:187.00px;width:60px;text-align:right">$1,900</div>
<div class="a gd" style="left:355.1px;top:187.00px;width:60px;text-align:right">$560</div>
<div class="a gd" style="left:403.1px;top:187.00px;width:60px;text-align:right">$3,800</div>
<div class="a gd" style="left:118.9px;top:198.30px;width:60px;text-align:right">8</div>
<div class="a gd" style="left:182.5px;top:198.30px">Luna</div>
<div class="a gd" style="left:236.6px;top:198.30px">Vasquez</div>
<div class="a gd" style="left:301.0px;top:198.30px;width:60px;text-align:right">$2,400</div>
<div class="a gd" style="left:355.1px;top:198.30px;width:60px;text-align:right">$650</div>
<div class="a gd" style="left:403.1px;top:198.30px;width:60px;text-align:right">$4,800</div>
<div class="a gd" style="left:118.9px;top:209.60px;width:60px;text-align:right">9</div>
<div class="a gd" style="left:182.5px;top:209.60px">Rico</div>
<div class="a gd" style="left:236.6px;top:209.60px">Olivera</div>
<div class="a gd" style="left:301.0px;top:209.60px;width:60px;text-align:right">$2,100</div>
<div class="a gd" style="left:355.1px;top:209.60px;width:60px;text-align:right">$600</div>
<div class="a gd" style="left:403.1px;top:209.60px;width:60px;text-align:right">$4,200</div>
<div class="a gd" style="left:118.9px;top:220.90px;width:60px;text-align:right">10</div>
<div class="a gd" style="left:182.5px;top:220.90px">Ryan</div>
<div class="a gd" style="left:236.6px;top:220.90px">Holder</div>
<div class="a gd" style="left:301.0px;top:220.90px;width:60px;text-align:right">$1,200</div>
<div class="a gd" style="left:355.1px;top:220.90px;width:60px;text-align:right">$500</div>
<div class="a gd" style="left:403.1px;top:220.90px;width:60px;text-align:right">$2,400</div>
<div class="a gd" style="left:118.9px;top:232.20px;width:60px;text-align:right;color:#333">(New)</div>
<svg style="left:117.6px;top:231.7px" width="7" height="7" viewBox="0 0 7 7"><path d="M3.5 0.5v6M0.5 3.5h6M1.4 1.4l4.2 4.2M5.6 1.4l-4.2 4.2" stroke="#f0f0f0" stroke-width="0.8"/></svg>
<div class="a" style="left:116.2px;top:551.8px;width:809.8px;height:1.2px;background:#c6c6cc"></div>

<!-- FIELD LIST -->
<div class="a" style="left:926px;top:92px;width:73px;height:461px;background:#2b2b2b"></div>
<div class="a" style="left:931px;top:114.2px;width:68px;height:439px;background:#676767"></div>
<div class="a" style="left:934.3px;top:101px;font-size:11.25px;color:#f5f5f5">Field List</div>
<div class="a" style="left:932px;top:126.5px;font-size:6.76px;color:#f0f0f0;line-height:7.6px">No fields available to be added to the current
view.</div>

</body></html>
